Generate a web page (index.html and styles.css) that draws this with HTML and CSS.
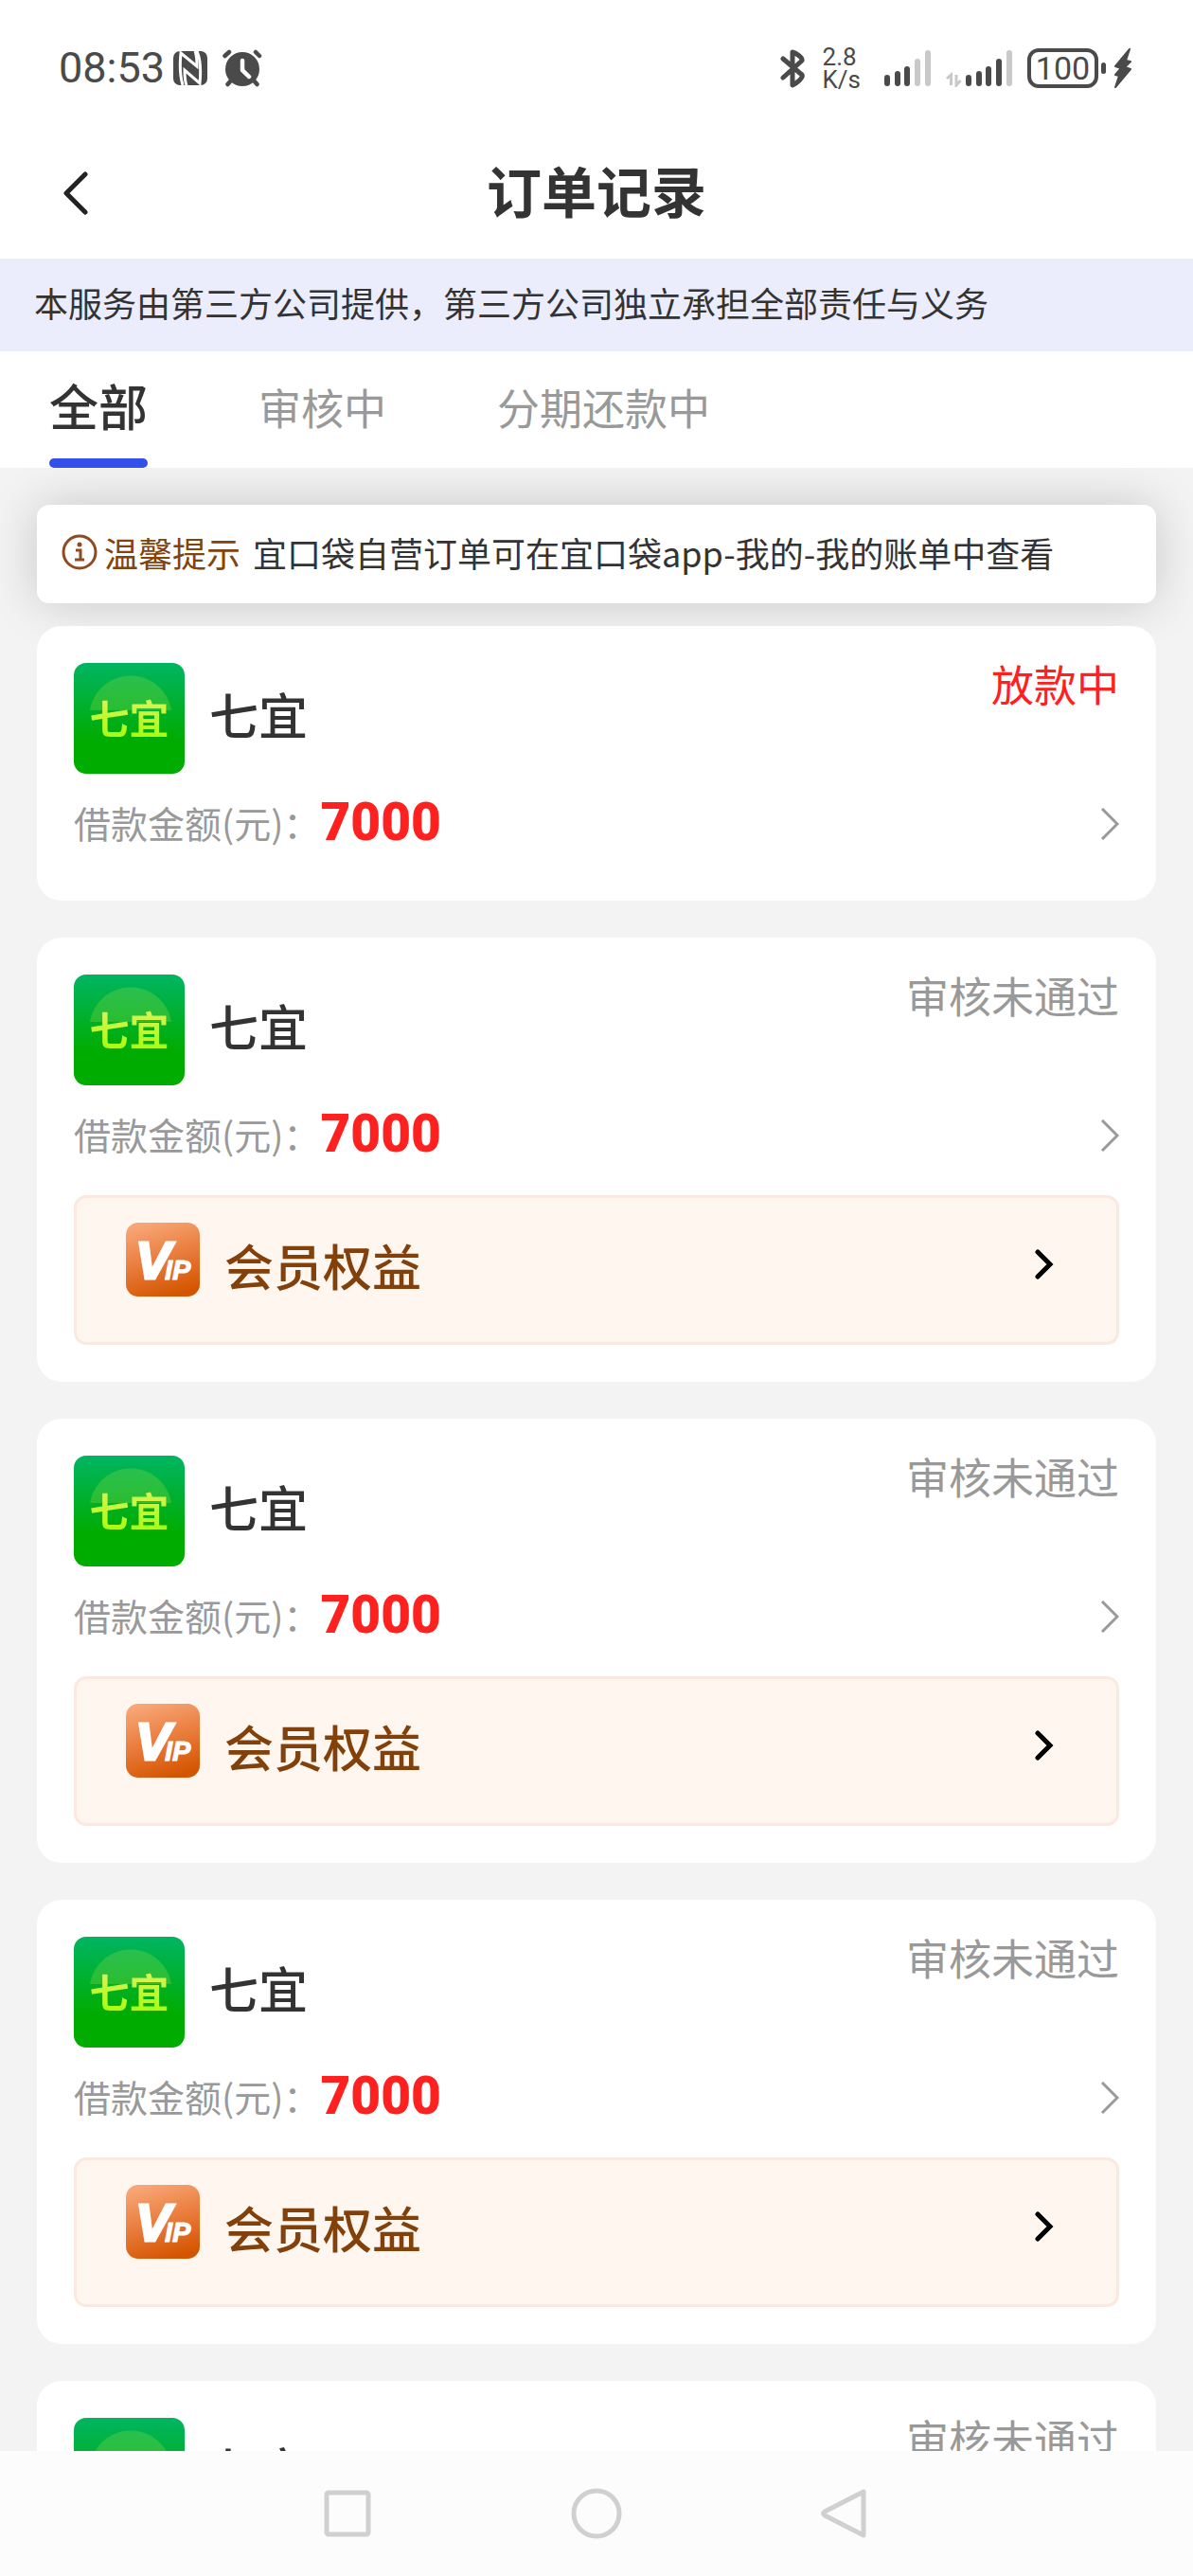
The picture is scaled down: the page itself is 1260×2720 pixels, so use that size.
FILE: index.html
```html
<!DOCTYPE html>
<html lang="zh-CN">
<head>
  <meta charset="UTF-8">
  <meta name="viewport" content="width=device-width, initial-scale=1.0">
  <title>订单记录</title>
  <link rel="stylesheet" href="styles.css">
</head>
<body>
  <!-- Shared icons -->
  <svg class="sprite" aria-hidden="true">
    <defs>
      <linearGradient id="vip-bg" x1="0.3" y1="0" x2="0.6" y2="1">
        <stop offset="0" stop-color="#f8a676"/>
        <stop offset="0.5" stop-color="#e97c3c"/>
        <stop offset="1" stop-color="#d45500"/>
      </linearGradient>
      <symbol id="icon-vip" viewBox="0 0 78 78">
        <rect width="78" height="78" rx="13" fill="url(#vip-bg)"/>
        <g fill="#fff" stroke="#fff" font-family="Liberation Sans, sans-serif" font-weight="700" font-style="italic">
          <text x="10" y="59" font-size="56" stroke-width="3">V</text>
          <text x="41" y="60" font-size="29" stroke-width="1">IP</text>
        </g>
      </symbol>
      <symbol id="icon-more" viewBox="0 0 20 34">
        <path d="M2 1L18 17L2 33" fill="none" stroke="#999" stroke-width="3"/>
      </symbol>
      <symbol id="icon-go" viewBox="0 0 20 34">
        <path d="M3 4L16 17L3 30" fill="none" stroke="#000" stroke-width="5" stroke-linecap="round"/>
      </symbol>
    </defs>
  </svg>

  <!-- Status bar -->
  <div class="status-bar">
    <div class="status-left">
      <span class="time">08:53</span>
      <svg class="nfc" width="36" height="36" viewBox="0 0 36 36">
        <rect width="36" height="36" rx="7" fill="#4a4a4a"/>
        <path d="M10 36C7 26 7 12 8 2L25 16C25 10 25 5 23 0" fill="none" stroke="#fff" stroke-width="3"/>
        <path d="M25 0C29 9 29 24 28 34L12 20C12 27 12 31 14 36" fill="none" stroke="#fff" stroke-width="3"/>
      </svg>
      <svg width="42" height="40" viewBox="0 0 42 40">
        <g stroke="#4a4a4a" stroke-linecap="round">
          <path d="M2.500 7L7 3M39 7L35 3" stroke-width="4.500"/>
          <path d="M9 33L5.500 37M33 33L36.500 37" stroke-width="4.500"/>
        </g>
        <circle cx="21" cy="21" r="18" fill="#4a4a4a"/>
        <path d="M21 12V22L28 29" fill="none" stroke="#fff" stroke-width="4.500" stroke-linecap="round"/>
      </svg>
    </div>
    <div class="status-right">
      <svg width="26" height="42" viewBox="0 0 26 42">
        <path d="M3 11L23 28C25 31 17 37 13 39V4C17 5 24 10 23 13L3 31" fill="none" stroke="#4a4a4a" stroke-width="5" stroke-linecap="round" stroke-linejoin="round"/>
      </svg>
      <div class="speed"><span>2.8</span><span>K/s</span></div>
      <svg class="signal-a" width="49" height="40" viewBox="0 0 49 40">
        <g fill="#4a4a4a">
          <rect x="0" y="27" width="6" height="12" rx="3"/>
          <rect x="11" y="23" width="6" height="16" rx="3"/>
          <rect x="21" y="18" width="6" height="21" rx="3"/>
        </g>
        <g fill="#c9c9c9">
          <rect x="32" y="10" width="6" height="29" rx="3"/>
          <rect x="43" y="1" width="6" height="38" rx="3"/>
        </g>
      </svg>
      <svg class="signal-b" width="70" height="40" viewBox="0 0 70 40">
        <path d="M1 31L5.500 27V38M11 27V38L15.500 33" fill="none" stroke="#c9c9c9" stroke-width="3"/>
        <g fill="#4a4a4a">
          <rect x="21" y="27" width="6" height="12" rx="3"/>
          <rect x="32" y="23" width="6" height="16" rx="3"/>
          <rect x="42" y="18" width="6" height="21" rx="3"/>
          <rect x="53" y="10" width="6" height="29" rx="3"/>
        </g>
        <rect x="64" y="1" width="6" height="38" rx="3" fill="#c9c9c9"/>
      </svg>
      <span class="battery">100</span>
      <span class="battery-tip"></span>
      <svg width="20" height="42" viewBox="0 0 20 42">
        <path d="M17 1L2 19L8 21L2 28L6 29L2 41L18 22L12 20L18 14L13 13Z" fill="#4a4a4a" stroke="#4a4a4a" stroke-width="2" stroke-linejoin="round"/>
      </svg>
    </div>
  </div>

  <header class="page-header">
    <button class="back" type="button" aria-label="返回">
      <svg width="26" height="46" viewBox="0 0 26 46">
        <path d="M23 3L3 23L23 43" fill="none" stroke="#222" stroke-width="5" stroke-linecap="round" stroke-linejoin="round"/>
      </svg>
    </button>
    <h1>订单记录</h1>
  </header>

  <p class="notice">本服务由第三方公司提供，第三方公司独立承担全部责任与义务</p>

  <nav class="tabs">
    <button class="tab active" type="button">全部</button>
    <button class="tab" type="button">审核中</button>
    <button class="tab" type="button">分期还款中</button>
  </nav>

  <main class="content">
    <div class="tip">
      <svg width="38" height="38" viewBox="0 0 38 38">
        <circle cx="19" cy="19" r="17" fill="none" stroke="#8f4a22" stroke-width="3"/>
        <circle cx="19" cy="11" r="2.500" fill="#8f4a22"/>
        <path d="M15 17H20V27M14 27H24" fill="none" stroke="#8f4a22" stroke-width="3"/>
      </svg>
      <strong>温馨提示</strong>
      <span>宜口袋自营订单可在宜口袋app-我的-我的账单中查看</span>
    </div>

    <!-- Orders -->
    <article class="order">
      <div class="order-head">
        <div class="logo"><span>七宜</span></div>
        <h2>七宜</h2>
        <span class="state lending">放款中</span>
      </div>
      <div class="order-amount">
        <span class="label">借款金额(元)：</span>
        <span class="amount">7000</span>
        <button class="more" type="button" aria-label="查看订单"><svg><use href="#icon-more"/></svg></button>
      </div>
    </article>

    <article class="order">
      <div class="order-head">
        <div class="logo"><span>七宜</span></div>
        <h2>七宜</h2>
        <span class="state">审核未通过</span>
      </div>
      <div class="order-amount">
        <span class="label">借款金额(元)：</span>
        <span class="amount">7000</span>
        <button class="more" type="button" aria-label="查看订单"><svg><use href="#icon-more"/></svg></button>
      </div>
      <button class="vip" type="button">
        <svg class="vip-icon"><use href="#icon-vip"/></svg>
        <span>会员权益</span>
        <svg class="vip-go"><use href="#icon-go"/></svg>
      </button>
    </article>

    <article class="order">
      <div class="order-head">
        <div class="logo"><span>七宜</span></div>
        <h2>七宜</h2>
        <span class="state">审核未通过</span>
      </div>
      <div class="order-amount">
        <span class="label">借款金额(元)：</span>
        <span class="amount">7000</span>
        <button class="more" type="button" aria-label="查看订单"><svg><use href="#icon-more"/></svg></button>
      </div>
      <button class="vip" type="button">
        <svg class="vip-icon"><use href="#icon-vip"/></svg>
        <span>会员权益</span>
        <svg class="vip-go"><use href="#icon-go"/></svg>
      </button>
    </article>

    <article class="order">
      <div class="order-head">
        <div class="logo"><span>七宜</span></div>
        <h2>七宜</h2>
        <span class="state">审核未通过</span>
      </div>
      <div class="order-amount">
        <span class="label">借款金额(元)：</span>
        <span class="amount">7000</span>
        <button class="more" type="button" aria-label="查看订单"><svg><use href="#icon-more"/></svg></button>
      </div>
      <button class="vip" type="button">
        <svg class="vip-icon"><use href="#icon-vip"/></svg>
        <span>会员权益</span>
        <svg class="vip-go"><use href="#icon-go"/></svg>
      </button>
    </article>

    <article class="order">
      <div class="order-head">
        <div class="logo"><span>七宜</span></div>
        <h2>七宜</h2>
        <span class="state">审核未通过</span>
      </div>
    </article>
  </main>

  <!-- System navigation -->
  <footer class="system-nav">
    <button type="button" aria-label="最近任务">
      <svg width="54" height="54" viewBox="0 0 54 54"><rect x="4" y="5" width="44" height="44" rx="2"/></svg>
    </button>
    <button type="button" aria-label="主屏幕">
      <svg width="54" height="54" viewBox="0 0 54 54"><circle cx="27" cy="27" r="24"/></svg>
    </button>
    <button type="button" aria-label="返回">
      <svg width="54" height="54" viewBox="0 0 54 54"><path d="M47 4V50L6 29Q3 27 6 25Z"/></svg>
    </button>
  </footer>
</body>
</html>
```

FILE: styles.css
```css
:root {
  --page-bg: #f3f3f3;
  --text: #333;
  --muted: #999;
  --gap: 39px;
  --status: #4a4a4a;
}

* {
  box-sizing: border-box;
}

html, body {
  height: 100%;
  margin: 0;
}

body {
  display: flex;
  flex-direction: column;
  overflow: hidden;
  background: var(--page-bg);
  color: var(--text);
  font-family: "Noto Sans CJK SC", sans-serif;
}

h1, h2, p {
  margin: 0;
}

button {
  border: 0;
  padding: 0;
  background: none;
  color: inherit;
  font: inherit;
  cursor: pointer;
}

svg {
  display: block;
  flex: none;
}

.sprite {
  position: absolute;
  width: 0;
  height: 0;
}

/* Status bar */
.status-bar {
  flex: none;
  display: flex;
  justify-content: space-between;
  align-items: center;
  height: 134px;
  padding: 10px 64px 0 62px;
  background: #fff;
  color: var(--status);
  font-family: Roboto, sans-serif;
}

.status-left,
.status-right {
  display: flex;
  align-items: center;
}

.time {
  font-size: 45px;
  line-height: 48px;
}

.nfc {
  margin: 0 16px 0 9px;
}

.speed {
  display: flex;
  flex-direction: column;
  margin: 0 25px 0 19px;
  font-size: 26px;
  line-height: 24px;
}

.signal-a,
.signal-b {
  margin-right: 16px;
}

.battery {
  width: 75px;
  height: 42px;
  border: 4px solid var(--status);
  border-radius: 12px;
  font-size: 34px;
  line-height: 34px;
  text-align: center;
}

.battery-tip {
  width: 5px;
  height: 12px;
  margin: 0 8px 0 3px;
  border-radius: 3px;
  background: var(--status);
}

/* Header */
.page-header {
  flex: none;
  display: grid;
  grid-template-columns: 1fr auto 1fr;
  align-items: center;
  height: 139px;
  padding: 0 67px;
  background: #fff;
}

.page-header h1 {
  padding-bottom: 8px;
  font-size: 58px;
  font-weight: 700;
  line-height: 64px;
}

.notice {
  flex: none;
  padding: 21px 36px 27px;
  background: #ebedfd;
  font-size: 36px;
  line-height: 50px;
}

/* Tabs */
.tabs {
  flex: none;
  display: flex;
  gap: 117px;
  height: 123px;
  padding: 0 52px;
  background: #fff;
}

.tab {
  padding-top: 5px;
  border-bottom: 10px solid transparent;
  color: var(--muted);
  font-size: 45px;
  line-height: 90px;
}

.tab.active {
  position: relative;
  padding-top: 0;
  color: var(--text);
  font-size: 52px;
  font-weight: 500;
}

.tab.active::after {
  content: '';
  position: absolute;
  left: 0;
  right: 0;
  bottom: -10px;
  height: 10px;
  border-radius: 5px;
  background: #3350e8;
}

/* Content */
.content {
  flex: 1;
  min-height: 0;
  overflow: hidden;
  padding: var(--gap);
}

.tip {
  display: flex;
  align-items: center;
  height: 104px;
  margin-bottom: 24px;
  padding: 0 26px 4px;
  border-radius: 13px;
  background: #fff;
  box-shadow: 0 0 52px rgba(0, 0, 0, 0.18);
  font-size: 36px;
  line-height: 50px;
}

.tip strong {
  margin: 0 13px 0 7px;
  color: #82430c;
  font-weight: 400;
}

.order {
  position: relative;
  margin-bottom: var(--gap);
  padding: var(--gap);
  border-radius: 26px;
  background: #fff;
}

.order-head {
  display: flex;
  align-items: center;
}

.logo {
  display: flex;
  align-items: center;
  justify-content: center;
  width: 117px;
  height: 117px;
  padding-bottom: 4px;
  border-radius: 13px;
  background:
    radial-gradient(circle at 60px 57px, rgba(140, 220, 70, 0.3) 0, rgba(140, 220, 70, 0.3) 43px, transparent 44px) 0 0 / 100% 50px no-repeat,
    linear-gradient(#00b562, #00ac00 70%);
}

.logo span {
  background: linear-gradient(#e6f06a, #a0ff00);
  background-clip: text;
  color: transparent;
  font-size: 42px;
  font-weight: 700;
  line-height: 60px;
}

.order-head h2 {
  margin-left: 26px;
  padding-bottom: 10px;
  font-size: 52px;
  font-weight: 500;
  line-height: 60px;
}

.state {
  align-self: flex-start;
  margin-left: auto;
  color: var(--muted);
  font-size: 45px;
  line-height: 44px;
}

.state.lending {
  color: #ff2020;
}

.order-amount {
  display: flex;
  align-items: center;
  height: 95px;
  padding-top: 10px;
}

.label {
  padding-bottom: 4px;
  color: var(--muted);
  font-size: 39px;
  line-height: 50px;
}

.amount {
  padding-bottom: 4px;
  color: #ff2020;
  font-family: Roboto, sans-serif;
  font-size: 55px;
  font-weight: 900;
  line-height: 60px;
}

.more {
  margin-left: auto;
}

.more svg,
.vip-go {
  width: 20px;
  height: 34px;
}

.vip {
  display: flex;
  align-items: flex-start;
  width: 100%;
  height: 158px;
  margin-top: 21px;
  padding: 26px 66px 0 52px;
  border: 3px solid #fbe9df;
  border-radius: 13px;
  background: #fff6f0;
  color: #82400a;
  font-size: 52px;
  font-weight: 500;
  line-height: 90px;
}

.vip-icon {
  width: 78px;
  height: 78px;
  margin-right: 26px;
}

.vip-go {
  margin: 27px 0 0 auto;
}

/* System navigation */
.system-nav {
  flex: none;
  display: flex;
  justify-content: center;
  align-items: center;
  gap: 208px;
  height: 132px;
  background: #fcfcfc;
}

.system-nav svg {
  fill: none;
  stroke: #d0d0d0;
  stroke-width: 5px;
  stroke-linejoin: round;
}
```
